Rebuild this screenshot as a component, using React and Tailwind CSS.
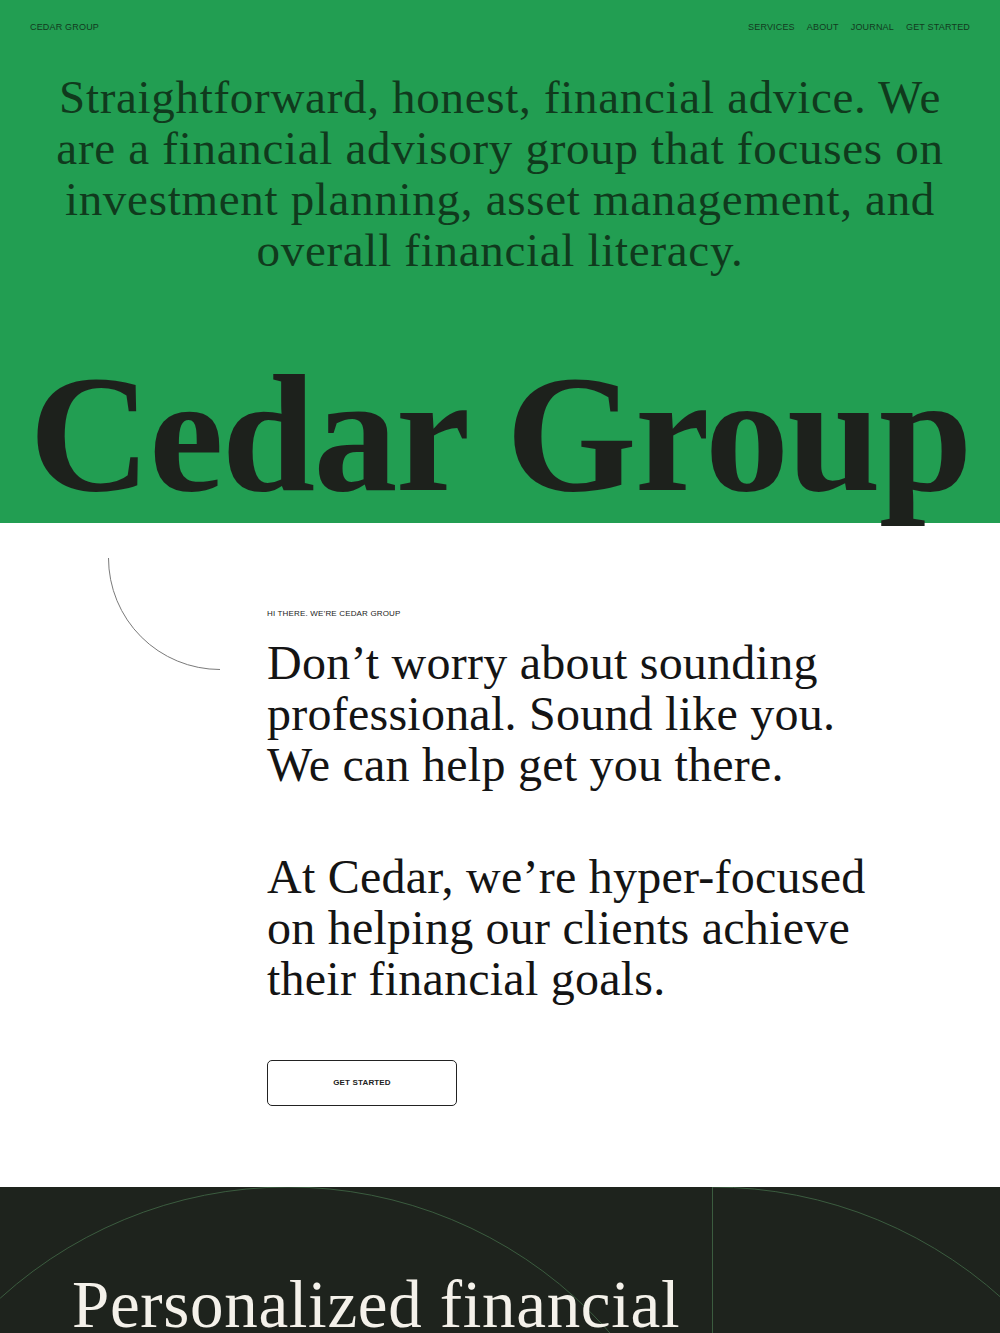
import React from "react";

const serif = { fontFamily: '"Liberation Serif", "Times New Roman", serif' };

export default function App() {
  const nav = ["SERVICES", "ABOUT", "JOURNAL", "GET STARTED"];

  return (
    <div className="w-[1000px] bg-white font-['Liberation_Sans',Arial,sans-serif]">
      {/* Green hero */}
      <section className="bg-[#229e52] text-[#123a20]">
        <header className="flex items-center justify-between px-[30px] pt-[21px] text-[9px] leading-[12px] tracking-[0.02em]">
          <span>CEDAR GROUP</span>
          <nav className="flex gap-[12px]">
            {nav.map((item) => (
              <a key={item} href="#">
                {item}
              </a>
            ))}
          </nav>
        </header>

        <p
          style={serif}
          className="mt-[39px] text-center text-[47px] leading-[51px] tracking-[0.015em] text-[#103a1d] whitespace-nowrap"
        >
          Straightforward, honest, financial advice. We
          <br />
          are a financial advisory group that focuses on
          <br />
          investment planning, asset management, and
          <br />
          overall financial literacy.
        </p>

        <h1
          style={serif}
          className="mt-[73px] pb-[6px] text-center text-[168px] font-bold leading-none tracking-[-0.01em] text-[#1d211c] whitespace-nowrap"
        >
          Cedar Group
        </h1>
      </section>

      {/* Intro */}
      <section className="relative pt-[86px] pb-[81px] pl-[267px]">
        <svg className="absolute left-0 top-0" width="240" height="160" fill="none">
          <path d="M108.5 35 A111.5 111.5 0 0 0 220 146.5" stroke="#7a7a7a" strokeWidth="1" />
        </svg>

        <p className="text-[8px] leading-[10px] tracking-[0.02em] text-[#222]">
          HI THERE. WE&rsquo;RE CEDAR GROUP
        </p>

        <h2
          style={serif}
          className="mt-[18px] text-[48px] leading-[51px] tracking-[0.005em] text-[#141414]"
        >
          Don&rsquo;t worry about sounding
          <br />
          professional. Sound like you.
          <br />
          We can help get you there.
        </h2>

        <p
          style={serif}
          className="mt-[61px] text-[48px] leading-[51px] tracking-[0.005em] text-[#141414]"
        >
          At Cedar, we&rsquo;re hyper-focused
          <br />
          on helping our clients achieve
          <br />
          their financial goals.
        </p>

        <button className="mt-[56px] flex h-[46px] w-[190px] items-center justify-center rounded-[5px] border-[1.5px] border-[#222] text-[8px] font-bold tracking-[0.02em] text-[#222]">
          GET STARTED
        </button>
      </section>

      {/* Dark section */}
      <section className="relative h-[600px] overflow-hidden bg-[#1e231d]">
        <svg className="absolute left-0 top-0" width="1000" height="600" fill="none">
          <circle cx="288" cy="428" r="428" stroke="#3b5c3f" strokeWidth="1" />
          <line x1="712.5" y1="0" x2="712.5" y2="600" stroke="#3b5c3f" strokeWidth="1" />
          <path d="M712.5 0 A432 432 0 0 1 1144.5 432" stroke="#3b5c3f" strokeWidth="1" />
        </svg>
        <h2
          style={serif}
          className="relative pt-[81px] pl-[72px] text-[67px] leading-[73px] tracking-[0.01em] text-[#f4f1ea]"
        >
          Personalized financial
        </h2>
      </section>
    </div>
  );
}
